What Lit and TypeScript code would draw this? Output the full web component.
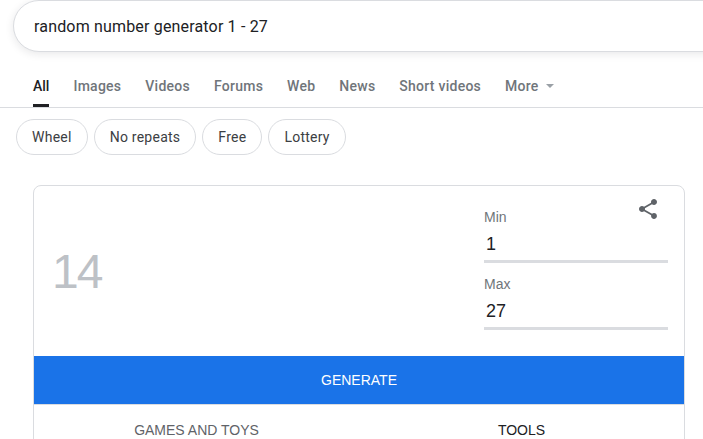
import { LitElement, html, css } from "lit";
import { customElement } from "lit/decorators.js";

@customElement("app-root")
export class AppRoot extends LitElement {
  static styles = css`
    :host { display: block; width: 703px; height: 439px; overflow: hidden; background: #fff; font-family: Roboto, "Liberation Sans", sans-serif; }
    .search-wrap { padding: 0 0 0 13px; height: 52px; }
    .search { width: 720px; height: 52px; box-sizing: border-box; border: 1px solid #dadce0; border-radius: 26px; box-shadow: 0 2px 8px rgba(32,33,36,.1); display: flex; align-items: center; padding: 0 0 0 20px; font-size: 16px; letter-spacing: .17px; color: #202124; background: #fff; }
    .tabs { display: flex; height: 56px; box-sizing: border-box; border-bottom: 1px solid #dadce0; padding-left: 33px; gap: 24px; font-size: 14px; font-weight: 500; letter-spacing: .25px; color: #70757a; align-items: stretch; }
    .tab { display: flex; align-items: center; height: 42px; box-sizing: border-box; margin-top: 13px; }
    .tab.on { color: #202124; border-bottom: 3px solid #202124; height: 42px; padding-top: 3px; letter-spacing: 0; }
    .more { gap: 7px; }
    .caret { width: 0; height: 0; border-left: 4px solid transparent; border-right: 4px solid transparent; border-top: 4px solid #9aa0a6; }
    .chips { display: flex; gap: 6px; padding: 11px 0 0 16px; height: 48px; box-sizing: border-box; }
    .chip { height: 36px; box-sizing: border-box; border: 1px solid #dadce0; border-radius: 18px; padding: 0 15px; display: flex; align-items: center; font-size: 14px; letter-spacing: .25px; color: #3c4043; }
    .card { margin: 29px 0 0 33px; width: 652px; height: 300px; box-sizing: border-box; border: 1px solid #dadce0; border-radius: 8px 8px 0 0; position: relative; font-family: "Liberation Sans", Arial, sans-serif; }
    .top { display: flex; height: 170px; box-sizing: border-box; }
    .result { flex: 1; padding: 58px 0 0 18px; font-size: 48px; letter-spacing: -2px; line-height: 56px; color: #bdc1c6; }
    .fields { width: 184px; margin-right: 16px; padding-top: 23px; }
    .field { height: 67px; box-sizing: border-box; }
    .label { font-size: 14px; line-height: 16px; color: #70757a; }
    .value { font-size: 18px; line-height: 24px; color: #202124; padding: 7px 0 0 2px; border-bottom: 3px solid #dadce0; height: 38px; box-sizing: border-box; }
    .share { position: absolute; top: 11px; right: 24px; width: 24px; height: 24px; }
    .generate { height: 48px; background: #1a73e8; color: #fff; font-size: 14px; display: flex; align-items: center; justify-content: center; }
    .cats { display: flex; font-size: 14px; color: #5f6368; }
    .cat { flex: 1; text-align: center; padding-top: 17px; line-height: 16px; border-top: 1px solid #dadce0; }
    .cat.on { color: #202124; }
  `;

  render() {
    return html`
      <div class="search-wrap"><div class="search">random number generator 1 - 27</div></div>
      <div class="tabs">
        <div class="tab on">All</div>
        <div class="tab">Images</div>
        <div class="tab">Videos</div>
        <div class="tab">Forums</div>
        <div class="tab">Web</div>
        <div class="tab">News</div>
        <div class="tab">Short videos</div>
        <div class="tab more">More <span class="caret"></span></div>
      </div>
      <div class="chips">
        <div class="chip">Wheel</div>
        <div class="chip">No repeats</div>
        <div class="chip">Free</div>
        <div class="chip">Lottery</div>
      </div>
      <div class="card">
        <svg class="share" viewBox="0 0 24 24" fill="#5f6368"><path d="M18 16.08c-.76 0-1.44.3-1.96.77L8.91 12.7c.05-.23.09-.46.09-.7s-.04-.47-.09-.7l7.05-4.11c.54.5 1.25.81 2.04.81 1.66 0 3-1.34 3-3s-1.34-3-3-3-3 1.34-3 3c0 .24.04.47.09.7L8.04 9.81C7.5 9.31 6.79 9 6 9c-1.66 0-3 1.34-3 3s1.34 3 3 3c.79 0 1.5-.31 2.04-.81l7.12 4.16c-.05.21-.08.43-.08.65 0 1.61 1.31 2.92 2.92 2.92s2.92-1.31 2.92-2.92-1.31-2.92-2.92-2.92z"/></svg>
        <div class="top">
          <div class="result">14</div>
          <div class="fields">
            <div class="field"><div class="label">Min</div><div class="value">1</div></div>
            <div class="field"><div class="label">Max</div><div class="value">27</div></div>
          </div>
        </div>
        <div class="generate">GENERATE</div>
        <div class="cats"><div class="cat">GAMES AND TOYS</div><div class="cat on">TOOLS</div></div>
      </div>
    `;
  }
}
